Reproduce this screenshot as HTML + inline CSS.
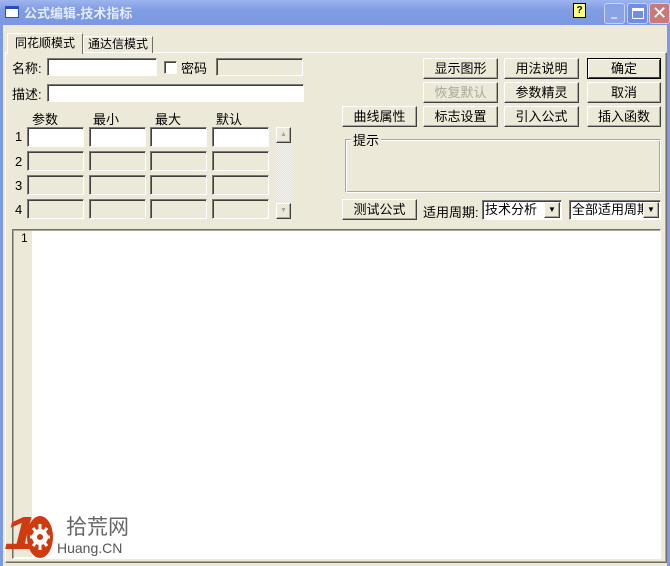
<!DOCTYPE html>
<html><head><meta charset="utf-8"><style>
*{box-sizing:border-box;margin:0;padding:0}
body{width:670px;height:566px;overflow:hidden;background:#ece9d8;font-family:"Liberation Sans","Noto Sans CJK SC","WenQuanYi Zen Hei",sans-serif;font-size:12px;color:#000;position:relative}
.a{position:absolute}
.title{left:0;top:0;width:670px;height:25px;background:linear-gradient(#9db4ee,#7f9ce4 40%,#7b98e0);}
.lb{left:0;top:25px;width:3px;height:541px;background:#7e9be2}
.rb{right:0;top:25px;width:3px;height:541px;background:#7e9be2}
.inp{position:absolute;background:#fff;border:1px solid;border-color:#7a7a72 #fff #fff #7a7a72;box-shadow:inset 1px 1px 0 #404040}
.dis{background:#ece9d8}
.btn{position:absolute;height:21px;border:1px solid;border-color:#fff #404040 #404040 #fff;box-shadow:inset -1px -1px 0 #aca899;text-align:center;line-height:19px;font-size:13px;background:#ece9d8}
.lbl{position:absolute;font-size:13px}
.tb{position:absolute;top:3px;width:21px;height:21px;border-radius:3px;border:1px solid #c9d3f3}
</style></head><body>
<div class="a title"></div>
<div class="a" style="left:5px;top:6px;width:14px;height:12px;background:#fff;border:1px solid #2a4fb0;border-top:3px solid #2a4fb0"></div>
<div class="a" style="left:24px;top:3px;color:#e4ebfb;font-weight:bold;font-size:13px">公式编辑-技术指标</div>
<div class="a" style="left:573px;top:3px;width:13px;height:15px;background:#ffff80;border:1px solid #000;font-size:10px;font-weight:bold;text-align:center;line-height:13px">?</div>
<div class="tb" style="left:604px;background:#8aa2e6"><div class="a" style="left:6px;top:13px;width:6px;height:2px;background:#c8d4f6"></div></div>
<div class="tb" style="left:627px;background:#6f8fe6"><div class="a" style="left:4px;top:4px;width:12px;height:11px;border:1px solid #fff;border-top:3px solid #fff"></div></div>
<div class="tb" style="left:649px;background:#c87a7a;font-size:18px;color:#fff;text-align:center;line-height:18px">✕</div>
<div class="a lb"></div><div class="a rb"></div>

<div class="a" style="left:5px;top:52px;width:662px;height:511px;border:1px solid;border-color:#fff #716f64 #716f64 #fff;box-shadow:inset -1px -1px 0 #aca899"></div>
<div class="a" style="left:7px;top:33px;width:76px;height:21px;background:#ece9d8;border:1px solid;border-color:#fff #716f64 transparent #fff;border-bottom:none;text-align:center;line-height:19px">同花顺模式</div>
<div class="a" style="left:83px;top:36px;width:70px;height:17px;border:1px solid;border-color:#fff #716f64 transparent #fff;border-bottom:none;text-align:center;line-height:15px">通达信模式</div>

<div class="lbl" style="left:12px;top:58px">名称:</div>
<div class="inp" style="left:47px;top:58px;width:110px;height:18px"></div>
<div class="inp" style="left:164px;top:61px;width:13px;height:13px"></div>
<div class="lbl" style="left:181px;top:58px">密码</div>
<div class="inp dis" style="left:216px;top:58px;width:87px;height:18px"></div>
<div class="lbl" style="left:12px;top:84px">描述:</div>
<div class="inp" style="left:47px;top:84px;width:257px;height:18px"></div>
<div class="lbl" style="left:32px;top:109px">参数</div>
<div class="lbl" style="left:93px;top:109px">最小</div>
<div class="lbl" style="left:155px;top:109px">最大</div>
<div class="lbl" style="left:216px;top:109px">默认</div>

<div class="lbl" style="left:15px;top:129px">1</div>
<div class="lbl" style="left:15px;top:154px">2</div>
<div class="lbl" style="left:15px;top:178px">3</div>
<div class="lbl" style="left:15px;top:202px">4</div>
<div class="inp" style="left:27px;top:127px;width:57px;height:20px"></div>
<div class="inp" style="left:89px;top:127px;width:57px;height:20px"></div>
<div class="inp" style="left:150px;top:127px;width:57px;height:20px"></div>
<div class="inp" style="left:212px;top:127px;width:57px;height:20px"></div>
<div class="inp dis" style="left:27px;top:151px;width:57px;height:20px"></div>
<div class="inp dis" style="left:89px;top:151px;width:57px;height:20px"></div>
<div class="inp dis" style="left:150px;top:151px;width:57px;height:20px"></div>
<div class="inp dis" style="left:212px;top:151px;width:57px;height:20px"></div>
<div class="inp dis" style="left:27px;top:175px;width:57px;height:20px"></div>
<div class="inp dis" style="left:89px;top:175px;width:57px;height:20px"></div>
<div class="inp dis" style="left:150px;top:175px;width:57px;height:20px"></div>
<div class="inp dis" style="left:212px;top:175px;width:57px;height:20px"></div>
<div class="inp dis" style="left:27px;top:199px;width:57px;height:20px"></div>
<div class="inp dis" style="left:89px;top:199px;width:57px;height:20px"></div>
<div class="inp dis" style="left:150px;top:199px;width:57px;height:20px"></div>
<div class="inp dis" style="left:212px;top:199px;width:57px;height:20px"></div>

<div class="a" style="left:276px;top:127px;width:15px;height:92px;background:repeating-conic-gradient(#f4f3ee 0 25%,#e4e1d4 0 50%) 0 0/2px 2px"></div>
<div class="btn" style="left:276px;top:127px;width:15px;height:16px;font-size:7px;line-height:13px;color:#aca899">▲</div>
<div class="btn" style="left:276px;top:203px;width:15px;height:16px;font-size:7px;line-height:13px;color:#aca899">▼</div>

<div class="btn" style="left:423px;top:58px;width:75px">显示图形</div>
<div class="btn" style="left:504px;top:58px;width:75px">用法说明</div>
<div class="btn" style="left:587px;top:58px;width:74px;border:1px solid #000;box-shadow:inset 1px 1px 0 #fff,inset -1px -1px 0 #404040">确定</div>
<div class="btn" style="left:423px;top:82px;width:75px;color:#aca899">恢复默认</div>
<div class="btn" style="left:504px;top:82px;width:75px">参数精灵</div>
<div class="btn" style="left:587px;top:82px;width:74px">取消</div>
<div class="btn" style="left:342px;top:106px;width:75px">曲线属性</div>
<div class="btn" style="left:423px;top:106px;width:75px">标志设置</div>
<div class="btn" style="left:504px;top:106px;width:75px">引入公式</div>
<div class="btn" style="left:587px;top:106px;width:74px">插入函数</div>

<div class="a" style="left:345px;top:139px;width:316px;height:54px;border:1px solid;border-color:#aca899 #fff #fff #aca899;box-shadow:1px 1px 0 #fff inset,-1px -1px 0 #aca899 inset"></div>
<div class="lbl" style="left:351px;top:130px;background:#ece9d8;padding:0 2px">提示</div>

<div class="btn" style="left:342px;top:199px;width:75px">测试公式</div>
<div class="lbl" style="left:423px;top:202px">适用周期:</div>
<div class="inp" style="left:482px;top:200px;width:80px;height:20px;font-size:13px;line-height:17px;padding-left:2px">技术分析</div>
<div class="btn" style="left:544px;top:202px;width:16px;height:16px;font-size:8px;line-height:14px">▼</div>
<div class="inp" style="left:569px;top:200px;width:92px;height:20px;font-size:13px;line-height:17px;padding-left:2px;overflow:hidden;white-space:nowrap">全部适用周期</div>
<div class="btn" style="left:643px;top:202px;width:16px;height:16px;font-size:8px;line-height:14px">▼</div>

<div class="a" style="left:12px;top:229px;width:649px;height:330px;background:#fff;border:1px solid;border-color:#716f64 #fff #fff #716f64;box-shadow:inset 1px 1px 0 #aca899"></div>
<div class="a" style="left:14px;top:231px;width:18px;height:326px;background:#ece9d8"></div>
<div class="lbl" style="left:21px;top:231px;font-size:12px">1</div>

<div class="a" style="left:8px;top:510px;font-size:46px;font-weight:bold;font-style:italic;color:#d03a10;line-height:46px;transform:scaleX(1.3)">1</div>
<svg class="a" style="left:26px;top:514px" width="28" height="46" viewBox="0 0 28 46"><ellipse cx="14" cy="23" rx="13" ry="21" fill="#d03a10"/><circle cx="14" cy="23" r="8" fill="#fff"/><circle cx="14" cy="23" r="3" fill="#d03a10"/><g stroke="#fff" stroke-width="3"><line x1="14" y1="10" x2="14" y2="36"/><line x1="4" y1="23" x2="24" y2="23"/><line x1="7" y1="14" x2="21" y2="32"/><line x1="21" y1="14" x2="7" y2="32"/></g><circle cx="14" cy="23" r="3" fill="#d03a10"/></svg>
<div class="a" style="left:66px;top:511px;font-size:21px;color:#666">拾荒网</div>
<div class="a" style="left:57px;top:540px;font-size:14px;color:#555">Huang.CN</div>
</body></html>
